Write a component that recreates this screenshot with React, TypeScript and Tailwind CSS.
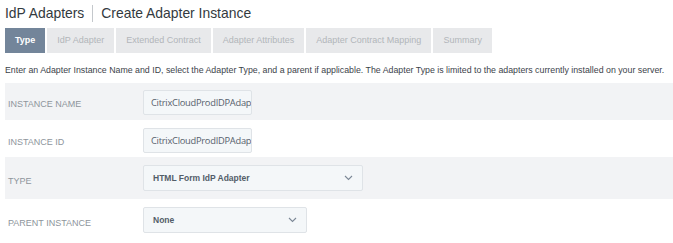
import * as React from "react";

const tabs = [
  "Type",
  "IdP Adapter",
  "Extended Contract",
  "Adapter Attributes",
  "Adapter Contract Mapping",
  "Summary",
];

function Chevron() {
  return (
    <svg width="9" height="6" viewBox="0 0 9 6" className="text-[#7c8896]">
      <path d="M1 1 L4.5 4.5 L8 1" fill="none" stroke="currentColor" strokeWidth="1.1" />
    </svg>
  );
}

function TextField({ value }: { value: string }) {
  return (
    <div className="flex h-[25px] w-[109px] items-center overflow-hidden whitespace-nowrap rounded-[2px] border border-[#dfe3e7] bg-[#f4f7f9] px-[7px] font-['Open_Sans',sans-serif] text-[9.3px] tracking-[-0.25px] text-[#56606c]">
      {value}
    </div>
  );
}

function SelectField({ value, width }: { value: string; width: string }) {
  return (
    <div
      className={`flex h-[26px] items-center justify-between rounded-[2px] border border-[#dfe3e7] bg-[#f4f7f9] pl-[9px] pr-[9px] text-[8.5px] font-bold text-[#535d69] ${width}`}
    >
      <span>{value}</span>
      <Chevron />
    </div>
  );
}

function Row({
  label,
  shaded,
  height,
  pad,
  children,
}: {
  label: string;
  shaded?: boolean;
  height: string;
  pad: string;
  children: React.ReactNode;
}) {
  return (
    <div className={`flex ${height} ${pad} ${shaded ? "bg-[#f2f3f5]" : ""}`}>
      <div className="flex w-[138px] items-center self-stretch pl-[3px] text-[9px] uppercase text-[#8e959c]">
        {label}
      </div>
      <div>{children}</div>
    </div>
  );
}

export default function App() {
  return (
    <div className="h-[243px] w-[673px] overflow-hidden bg-white font-['Liberation_Sans',Arial,sans-serif]">
      <div className="pl-[5px]">
        {/* Heading */}
        <div className="flex h-[28px] items-center pb-[2px] text-[13.9px] text-[#333a40]">
          <span>IdP Adapters</span>
          <span className="mx-[8px] h-[17px] w-px bg-[#c4c8cc]" />
          <span>Create Adapter Instance</span>
        </div>

        {/* Wizard tabs */}
        <div className="flex h-[25px] gap-[2px]">
          {tabs.map((t, i) => (
            <div
              key={t}
              className={
                i === 0
                  ? "flex items-center bg-[#73859a] px-[10px] text-[9px] font-bold text-white"
                  : "flex items-center bg-[#e8e9eb] px-[10px] text-[9px] text-[#b2b6ba]"
              }
            >
              {t}
            </div>
          ))}
        </div>

        <p className="mt-[11px] whitespace-nowrap text-[8.8px] text-[#3c434a]">
          Enter an Adapter Instance Name and ID, select the Adapter Type, and a parent if applicable. The Adapter Type is
          limited to the adapters currently installed on your server.
        </p>

        <div className="mt-[6px]">
          <Row label="Instance Name" shaded height="h-[37px]" pad="pt-[7px]">
            <TextField value="CitrixCloudProdIDPAdapter" />
          </Row>
          <Row label="Instance ID" height="h-[37px]" pad="pt-[8px]">
            <TextField value="CitrixCloudProdIDPAdapter" />
          </Row>
          <Row label="Type" shaded height="h-[42px]" pad="pt-[8px]">
            <SelectField value="HTML Form IdP Adapter" width="w-[220px]" />
          </Row>
          <Row label="Parent Instance" height="h-[41px]" pad="pt-[8px]">
            <SelectField value="None" width="w-[164px]" />
          </Row>
        </div>
      </div>
    </div>
  );
}
